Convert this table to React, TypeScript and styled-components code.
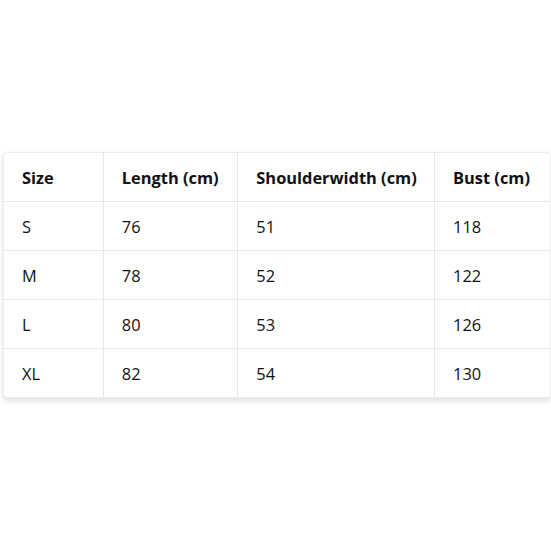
import React from "react";
import styled, { createGlobalStyle } from "styled-components";

const Global = createGlobalStyle`
  html, body { margin: 0; padding: 0; background: #fff; }
  body { font-family: "Open Sans", "Noto Sans", Arial, sans-serif; color: #111; }
`;

const Page = styled.div`
  width: 551px;
  height: 551px;
  box-sizing: border-box;
  padding: 152px 0 0 3px;
  display: flex;
  align-items: flex-start;
  justify-content: flex-start;
`;

const Card = styled.div`
  width: 546px;
  background: #fff;
  border: 1px solid #ececec;
  border-radius: 4px;
  box-shadow: 0 3px 6px rgba(0, 0, 0, 0.13);
  overflow: hidden;
`;

const Table = styled.table`
  width: 100%;
  border-collapse: collapse;
  table-layout: fixed;
`;

const Cell = styled.td<{ $head?: boolean }>`
  height: 48px;
  padding: 0 0 0 18px;
  font-size: 16.4px;
  font-weight: ${(p) => (p.$head ? 700 : 400)};
  color: #111;
  border-right: 1px solid #e8e8e8;
  border-bottom: 1px solid #e8e8e8;
  text-align: left;
  white-space: nowrap;
  &:last-child { border-right: none; }
`;

const Row = styled.tr`
  &:last-child td { border-bottom: none; }
`;

const widths = [99, 134, 196, 115];
const head = ["Size", "Length (cm)", "Shoulderwidth (cm)", "Bust (cm)"];
const rows = [
  ["S", "76", "51", "118"],
  ["M", "78", "52", "122"],
  ["L", "80", "53", "126"],
  ["XL", "82", "54", "130"],
];

export default function App() {
  return (
    <>
      <Global />
      <Page>
        <Card>
          <Table>
            <colgroup>
              {widths.map((w, i) => (
                <col key={i} style={{ width: w }} />
              ))}
            </colgroup>
            <thead>
              <Row>
                {head.map((h) => (
                  <Cell as="th" $head key={h}>
                    {h}
                  </Cell>
                ))}
              </Row>
            </thead>
            <tbody>
              {rows.map((r) => (
                <Row key={r[0]}>
                  {r.map((c, i) => (
                    <Cell key={i}>{c}</Cell>
                  ))}
                </Row>
              ))}
            </tbody>
          </Table>
        </Card>
      </Page>
    </>
  );
}
